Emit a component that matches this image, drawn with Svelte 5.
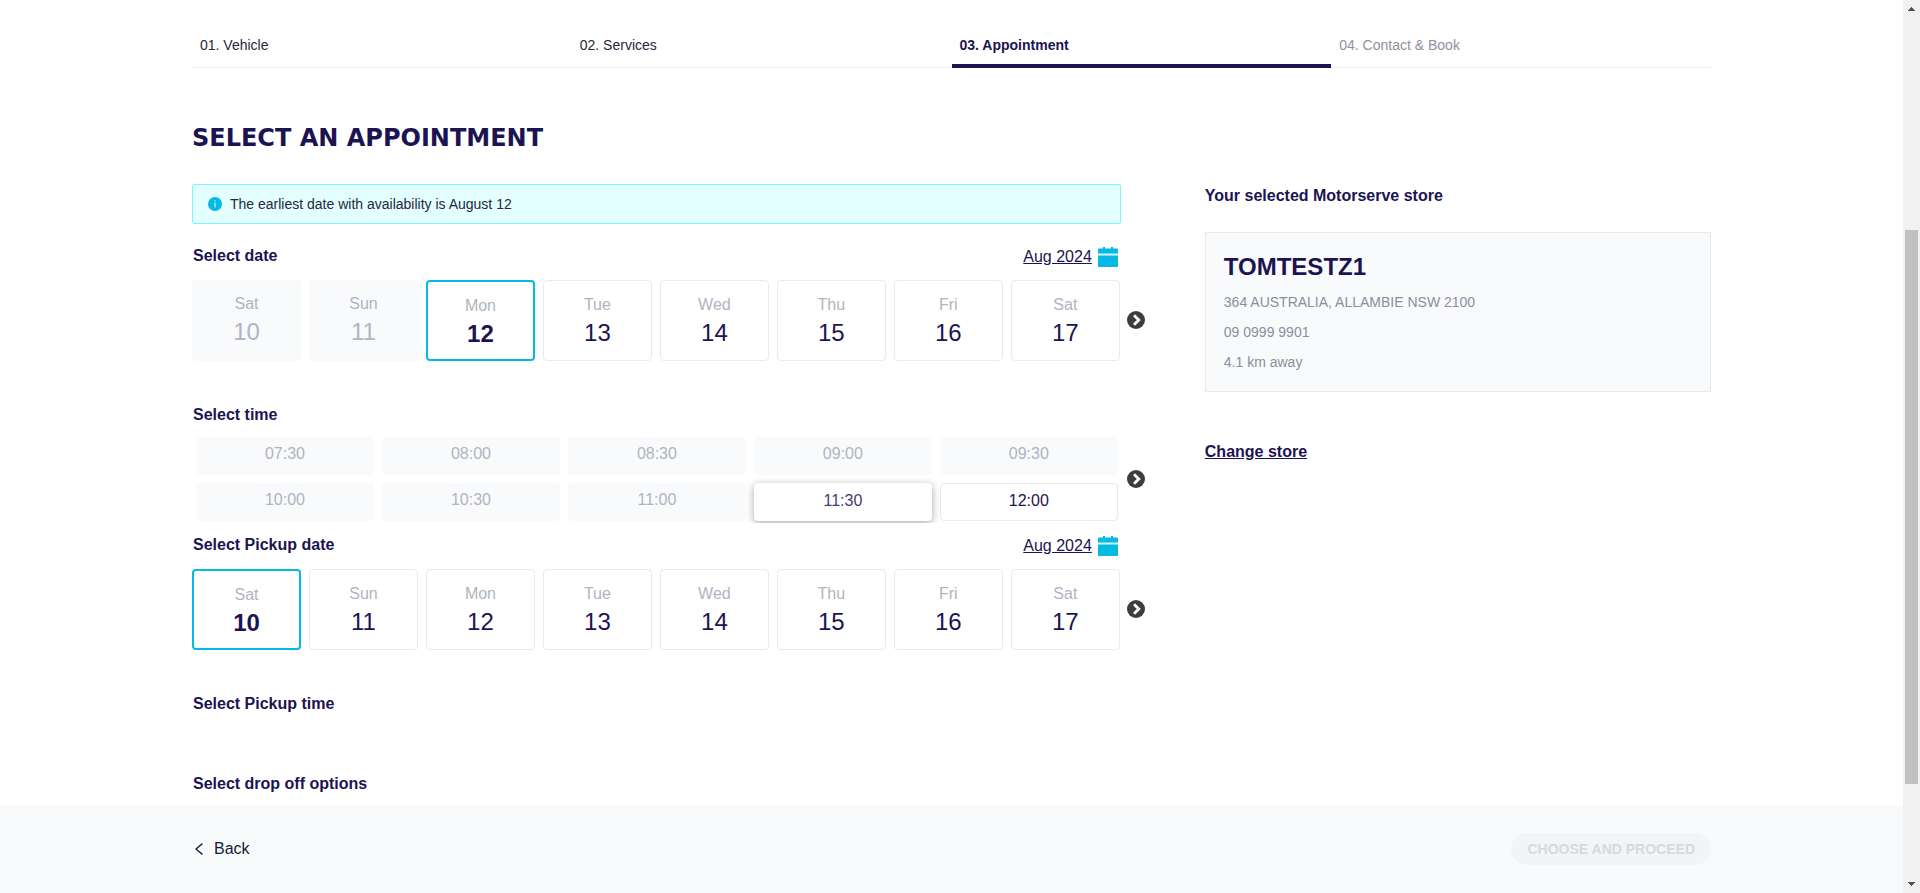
<script>
  const steps = [
    { label: '01. Vehicle', state: 'done' },
    { label: '02. Services', state: 'done' },
    { label: '03. Appointment', state: 'active' },
    { label: '04. Contact & Book', state: 'todo' }
  ];
  const weekdays = ['Sat', 'Sun', 'Mon', 'Tue', 'Wed', 'Thu', 'Fri', 'Sat'];
  const days = weekdays.map((name, i) => ({ name, date: i + 10 }));
  const times = ['07:30', '08:00', '08:30', '09:00', '09:30', '10:00', '10:30', '11:00', '11:30', '12:00'];

  let dropDate = $state(12);
  let pickupDate = $state(10);
  let raisedTime = $state('11:30');
</script>

{#snippet nextArrow(label)}
  <button class="next" aria-label={label}>
    <svg width="18" height="18" viewBox="0 0 18 18" aria-hidden="true">
      <circle cx="9" cy="9" r="9" fill="#3d3d3d" />
      <path d="M7 4.200 11.800 9 7 13.800" fill="none" stroke="#fff" stroke-width="2.800" />
    </svg>
  </button>
{/snippet}

{#snippet dateHeader(title)}
  <div class="date-header">
    <h2>{title}</h2>
    <button class="month">
      <span>Aug 2024</span>
      <svg width="20" height="20" viewBox="0 0 20 20" aria-hidden="true">
        <path d="M0 2.500A1 1 0 0 1 1 1.500H5V0h2v1.500h6V0h2v1.500h4a1 1 0 0 1 1 1V7H0z" fill="#04b9e2" />
        <path d="M0 6.500h20v2H0z" fill="#d3f4fb" />
        <path d="M0 8.500h20V19a1 1 0 0 1-1 1H1a1 1 0 0 1-1-1z" fill="#04b9e2" />
      </svg>
    </button>
  </div>
{/snippet}

<div class="screen">
  <div class="page">
    <main>
      <nav class="steps" aria-label="Booking steps">
        {#each steps as step}
          <a href="#step" class={step.state}>{step.label}</a>
        {/each}
      </nav>

      <h1>SELECT AN APPOINTMENT</h1>

      <div class="columns">
        <section class="booking">
          <p class="notice">
            <svg width="14" height="14" viewBox="0 0 14 14" aria-hidden="true">
              <circle cx="7" cy="7" r="7" fill="#04b9e2" />
              <path d="M6.400 3.200h1.200v1.300H6.400zM6.400 5.600h1.200v5H6.400z" fill="#c5f4fb" />
            </svg>
            <span>The earliest date with availability is August 12</span>
          </p>

          {@render dateHeader('Select date')}
          <div class="picker">
            <div class="dates">
              {#each days as day}
                <button
                  class="day"
                  class:selected={day.date === dropDate}
                  disabled={day.date < 12}
                  onclick={() => (dropDate = day.date)}
                >
                  <span class="weekday">{day.name}</span>
                  <span class="number">{day.date}</span>
                </button>
              {/each}
            </div>
            {@render nextArrow('Later dates')}
          </div>

          <h2 class="block">Select time</h2>
          <div class="picker">
            <div class="times">
              {#each times as time}
                <button
                  class="time"
                  class:raised={time === raisedTime}
                  disabled={time < '11:30'}
                  onclick={() => (raisedTime = time)}
                >{time}</button>
              {/each}
            </div>
            {@render nextArrow('Later times')}
          </div>

          <div class="pickup">
            {@render dateHeader('Select Pickup date')}
          </div>
          <div class="picker">
            <div class="dates">
              {#each days as day}
                <button
                  class="day"
                  class:selected={day.date === pickupDate}
                  onclick={() => (pickupDate = day.date)}
                >
                  <span class="weekday">{day.name}</span>
                  <span class="number">{day.date}</span>
                </button>
              {/each}
            </div>
            {@render nextArrow('Later pickup dates')}
          </div>

          <h2 class="block">Select Pickup time</h2>
          <h2 class="block">Select drop off options</h2>
        </section>

        <aside>
          <h2>Your selected Motorserve store</h2>
          <div class="store">
            <h3>TOMTESTZ1</h3>
            <p>364 AUSTRALIA, ALLAMBIE NSW 2100</p>
            <p>09 0999 9901</p>
            <p>4.1 km away</p>
          </div>
          <a class="change" href="#stores">Change store</a>
        </aside>
      </div>
    </main>

    <footer>
      <div class="footer-inner">
        <button class="back">
          <svg width="8" height="12" viewBox="0 0 8 12" aria-hidden="true">
            <path d="M7.400.6 1 6l6.400 5.400" fill="none" stroke="#1c2340" stroke-width="1.400" />
          </svg>
          <span>Back</span>
        </button>
        <button class="proceed" disabled>CHOOSE AND PROCEED</button>
      </div>
    </footer>
  </div>

  <div class="scrollbar" aria-hidden="true">
    <svg width="7" height="4" viewBox="0 0 7 4" shape-rendering="crispEdges"><path d="M3 0h1v1h1v1h1v1h1v1H0V3h1V2h1V1h1z" fill="#505050" /></svg>
    <div class="track"><div class="thumb"></div></div>
    <svg width="7" height="4" viewBox="0 0 7 4" shape-rendering="crispEdges"><path d="M0 0h7v1H6v1H5v1H4v1H3V3H2V2H1V1H0z" fill="#505050" /></svg>
  </div>
</div>

<style>
  :global(body) {
    margin: 0;
    background: #fff;
  }

  .screen {
    --navy: #1c1452;
    --cyan: #04b9e2;
    --pale: #f9fafc;
    --line: #e9eaec;
    --muted: #b0b4c0;
    display: flex;
    height: 100vh;
    overflow: hidden;
    font-family: 'Liberation Sans', Arial, sans-serif;
    color: var(--navy);
  }

  .screen * {
    box-sizing: border-box;
  }

  button {
    padding: 0;
    border: 0;
    background: none;
    font: inherit;
    color: inherit;
    cursor: pointer;
  }

  h1, h2, h3, p {
    margin: 0;
  }

  .page {
    flex: 1;
    min-width: 0;
    display: flex;
    flex-direction: column;
  }

  main {
    flex: 1;
    min-height: 0;
    overflow: hidden;
  }

  .steps, h1, .columns, .footer-inner {
    width: 80%;
    max-width: 1519px;
    margin: 0 auto;
  }

  .steps {
    display: grid;
    grid-template-columns: repeat(4, 1fr);
    box-shadow: inset 0 -1px #e9ebed;
  }

  .steps a {
    padding: 35px 8px 9px;
    border-bottom: 4px solid transparent;
    font-size: 14px;
    line-height: 20px;
    text-decoration: none;
    color: #25283a;
  }

  .steps .active {
    border-color: var(--navy);
    font-weight: 700;
    color: var(--navy);
  }

  .steps .todo {
    color: #8d92a0;
  }

  h1 {
    margin-top: 54px;
    font-family: 'Arial Black', 'DejaVu Sans', sans-serif;
    font-size: 24px;
    font-weight: 900;
    line-height: 32px;
  }

  .columns {
    display: grid;
    grid-template-columns: 32fr 17fr;
    gap: 60px;
    margin-top: 30px;
  }

  .notice {
    display: flex;
    align-items: center;
    gap: 8px;
    height: 40px;
    margin: 0 24px 16px 0;
    padding: 0 15px;
    border: 1px solid #80f5fc;
    border-radius: 2px;
    background: #e3ffff;
    font-size: 14px;
    color: #25283a;
  }

  h2 {
    font-size: 16px;
    line-height: 32px;
  }

  .booking h2 {
    padding-left: 1px;
  }

  .block {
    margin: 38px 0 6px;
  }

  .block + .block {
    margin-top: 48px;
  }

  .date-header {
    display: flex;
    justify-content: space-between;
    margin: 0 27px 6px 0;
  }

  .pickup {
    margin-top: 6px;
  }

  .month {
    display: flex;
    align-items: center;
    gap: 6px;
    height: 34px;
    font-size: 16px;
    text-decoration: underline;
  }

  .picker {
    display: grid;
    grid-template-columns: minmax(0, 1fr) 18px;
    gap: 6px;
    align-items: center;
  }

  .next {
    display: flex;
    margin-bottom: 2px;
  }

  .dates {
    display: grid;
    grid-template-columns: repeat(8, 1fr);
    gap: 8px;
    padding-right: 1px;
  }

  .day {
    display: flex;
    flex-direction: column;
    align-items: center;
    height: 81px;
    padding-top: 12px;
    border: 1px solid var(--line);
    border-radius: 4px;
    background: #fff;
  }

  .weekday {
    font-size: 16px;
    line-height: 24px;
    color: var(--muted);
  }

  .number {
    font-size: 24px;
    line-height: 32px;
  }

  .day.selected {
    border: 2px solid var(--cyan);
  }

  .selected .number {
    font-weight: 700;
  }

  .day:disabled, .time:disabled {
    border: 0;
    background: var(--pale);
    color: var(--muted);
    cursor: default;
  }

  .times {
    display: grid;
    grid-template-columns: repeat(5, 1fr);
    gap: 8px;
    padding: 0 3px 2px 4px;
    overflow: hidden;
  }

  .time {
    display: flex;
    justify-content: center;
    height: 38px;
    padding-top: 5px;
    border: 1px solid var(--line);
    border-radius: 4px;
    background: #fff;
    font-size: 16px;
    line-height: 24px;
  }

  .time.raised {
    border-color: #fff;
    box-shadow: 0 2px 8px rgba(0, 0, 0, 0.35);
    color: #443c74;
  }

  aside h2 {
    line-height: 24px;
  }

  .store {
    margin: 24px 0 44px;
    padding: 18px 18px 14px;
    border: 1px solid var(--line);
    background: var(--pale);
  }

  .store h3 {
    font-size: 24px;
    line-height: 32px;
    margin-bottom: 4px;
  }

  .store p {
    font-size: 14px;
    line-height: 30px;
    color: #8a8f9c;
  }

  .change {
    display: inline-block;
    font-size: 16px;
    font-weight: 700;
    line-height: 32px;
    color: inherit;
  }

  footer {
    background: var(--pale);
  }

  .footer-inner {
    display: flex;
    align-items: center;
    justify-content: space-between;
    height: 88px;
  }

  .back {
    display: flex;
    align-items: center;
    gap: 11px;
    padding-left: 3px;
    font-size: 16px;
    color: #141a38;
  }

  .proceed {
    height: 32px;
    padding: 0 16px;
    border-radius: 16px;
    background: #f3f4f6;
    font-size: 14px;
    font-weight: 700;
    color: #d6d9e0;
  }

  .scrollbar {
    display: flex;
    flex-direction: column;
    align-items: center;
    width: 17px;
    padding: 7px 0;
    background: #f1f1f1;
  }

  .track {
    display: flex;
    flex-direction: column;
    flex: 1;
    padding: 219px 0 98px;
  }

  .thumb {
    flex: 1;
    width: 13px;
    background: #c1c1c1;
  }
</style>
